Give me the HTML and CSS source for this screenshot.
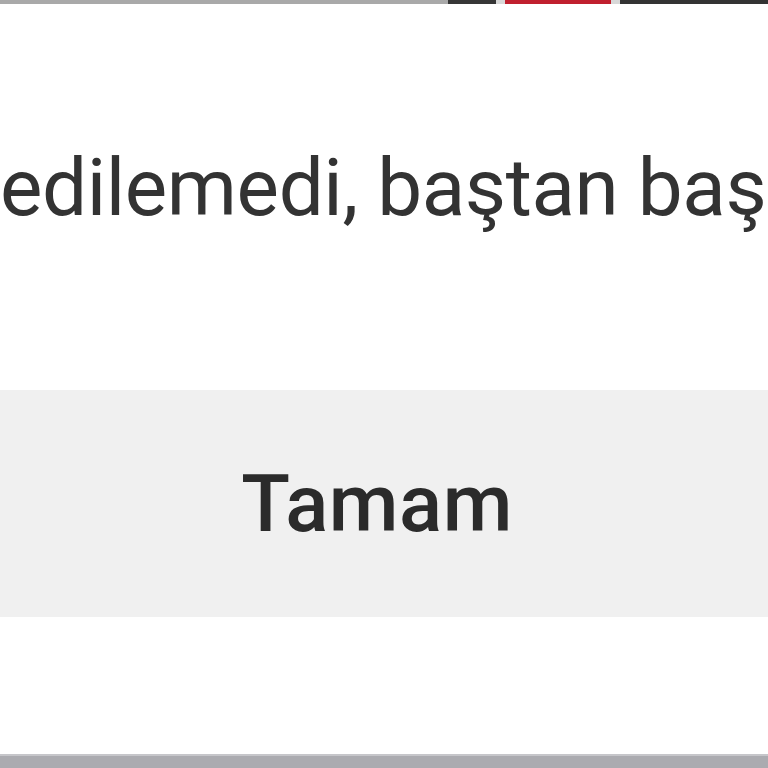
FILE: index.html
```html
<!DOCTYPE html>
<html lang="tr">
<head>
<meta charset="utf-8">
<title>Dialog</title>
<link rel="stylesheet" href="styles.css">
</head>
<body>
<div class="screen">
  <div class="topstrip">
    <div class="seg seg-gray"></div>
    <div class="seg seg-dark1"></div>
    <div class="seg seg-light"></div>
    <div class="seg seg-red"></div>
    <div class="seg seg-light"></div>
    <div class="seg seg-dark2"></div>
  </div>
  <div class="message">
    <p class="msg-text">edilemedi, baştan başlayın.</p>
  </div>
  <button class="ok-btn" type="button">Tamam</button>
  <div class="spacer"></div>
  <div class="bottombar"></div>
</div>
</body>
</html>
```
FILE: styles.css
```css
html, body {
  margin: 0;
  padding: 0;
  background: #ffffff;
}
.screen {
  width: 768px;
  height: 768px;
  overflow: hidden;
  display: flex;
  flex-direction: column;
  font-family: Roboto, "Noto Sans", sans-serif;
}
.topstrip {
  display: flex;
  height: 4px;
  flex: none;
}
.seg { height: 100%; }
.seg-gray { width: 448px; background: #a9a9a9; }
.seg-dark1 { width: 48px; background: #363636; }
.seg-light { width: 9px; background: #d8d8d8; }
.seg-red { width: 106px; background: #c0202e; }
.seg-dark2 { flex: 1; background: #333333; }
.message {
  height: 386px;
  flex: none;
  overflow: hidden;
}
.msg-text {
  margin: 0;
  padding: 144px 0 0 0;
  font-size: 80px;
  line-height: 80px;
  color: #333333;
  white-space: nowrap;
  letter-spacing: -0.4px;
}
.ok-btn {
  flex: none;
  height: 227px;
  width: 100%;
  border: 0;
  margin: 0;
  padding: 0 14px 0 0;
  background: #f0f0f0;
  font-family: Roboto, "Noto Sans", sans-serif;
  font-size: 80px;
  line-height: 80px;
  font-weight: 500;
  letter-spacing: 0.5px;
  color: #2b2b2b;
  display: flex;
  align-items: center;
  justify-content: center;
}
.spacer {
  flex: none;
  height: 137px;
  background: #ffffff;
}
.bottombar {
  flex: 1;
  background: #ababb0;
  border-top: 2px solid #c6c6ca;
}
```
